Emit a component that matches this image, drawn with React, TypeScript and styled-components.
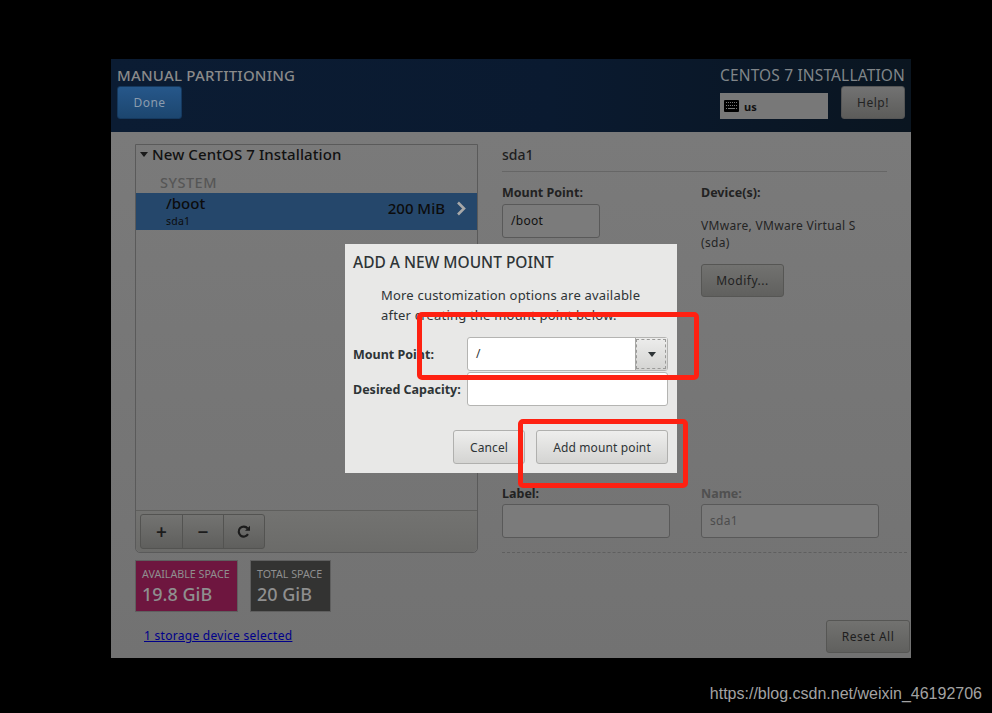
import styled, { createGlobalStyle } from "styled-components";

const GlobalStyle = createGlobalStyle`
    html, body {
        margin: 0;
        background: #000;
    }
    body {
        font-family: "Noto Sans", "Open Sans", sans-serif;
    }
`;

const KeyboardIcon = () => (
    <svg width="15" height="12" viewBox="0 0 15 12">
        <path
            fillRule="evenodd"
            fill="#000"
            d="M1 0h13a1 1 0 0 1 1 1v10a1 1 0 0 1-1 1H1a1 1 0 0 1-1-1V1a1 1 0 0 1 1-1zM2 2v1h1V2zm2 0v1h1V2zm2 0v1h1V2zm2 0v1h1V2zm2 0v1h1V2zm2 0v1h1V2zM2 5v1h1V5zm2 0v1h1V5zm2 0v1h1V5zm2 0v1h1V5zm2 0v1h1V5zm2 0v1h1V5zM2 8v1h1V8zm2 0v1h7V8zm8 0v1h1V8z"
        />
    </svg>
);

const RefreshIcon = () => (
    <svg width="14" height="14" viewBox="0 0 14 14">
        <path d="M11 9.2A5 5 0 1 1 10.6 3.4" fill="none" stroke="#1c1c1c" strokeWidth="2.2" />
        <path d="M8 5.8h5V0.8z" fill="#1c1c1c" />
    </svg>
);

const App = () => {
    return (
        <Page>
            <GlobalStyle />
            <Installer>
                <Header>
                    <HeaderLeft>
                        <SpokeTitle>MANUAL PARTITIONING</SpokeTitle>
                        <DoneButton>Done</DoneButton>
                    </HeaderLeft>
                    <HeaderRight>
                        <ProductTitle>CENTOS 7 INSTALLATION</ProductTitle>
                        <HeaderControls>
                            <KeyboardBox>
                                <KeyboardIcon />
                                <span>us</span>
                            </KeyboardBox>
                            <HelpButton>Help!</HelpButton>
                        </HeaderControls>
                    </HeaderRight>
                </Header>
                <Main>
                    <LeftColumn>
                        <MountPanel>
                            <PanelHeading>
                                <Caret />
                                New CentOS 7 Installation
                            </PanelHeading>
                            <SystemLabel>SYSTEM</SystemLabel>
                            <MountRow>
                                <div>
                                    <MountName>/boot</MountName>
                                    <MountDevice>sda1</MountDevice>
                                </div>
                                <MountSize>200 MiB</MountSize>
                                <Chevron viewBox="0 0 11 15" width="11" height="15">
                                    <path d="M2 1.5 8 7.5 2 13.5" fill="none" stroke="#a8a8a8" strokeWidth="2.6" />
                                </Chevron>
                            </MountRow>
                            <PanelSpacer />
                            <PanelToolbar>
                                <ToolGroup>
                                    <ToolButton>+</ToolButton>
                                    <ToolButton>−</ToolButton>
                                    <ToolButton $narrow>
                                        <RefreshIcon />
                                    </ToolButton>
                                </ToolGroup>
                            </PanelToolbar>
                        </MountPanel>
                        <Tiles>
                            <SpaceTile $bg="#6e163f" $width={103}>
                                <TileLabel>AVAILABLE SPACE</TileLabel>
                                <TileValue>19.8 GiB</TileValue>
                            </SpaceTile>
                            <SpaceTile $bg="#333332" $width={81}>
                                <TileLabel>TOTAL SPACE</TileLabel>
                                <TileValue>20 GiB</TileValue>
                            </SpaceTile>
                        </Tiles>
                        <StorageLink>1 storage device selected</StorageLink>
                    </LeftColumn>
                    <RightColumn>
                        <DeviceTitle>sda1</DeviceTitle>
                        <DetailsTop>
                            <Field $width={199}>
                                <TopLabel>Mount Point:</TopLabel>
                                <GhostInput $width={98}>/boot</GhostInput>
                            </Field>
                            <Field>
                                <TopLabel>Device(s):</TopLabel>
                                <DeviceText>
                                    VMware, VMware Virtual S
                                    <br />
                                    (sda)
                                </DeviceText>
                                <ModifyButton>Modify...</ModifyButton>
                            </Field>
                        </DetailsTop>
                        <DetailsBottom>
                            <Field $width={199}>
                                <FieldLabel>Label:</FieldLabel>
                                <GhostInput $width={168} />
                            </Field>
                            <Field>
                                <FieldLabel $muted>Name:</FieldLabel>
                                <GhostInput $width={178} $muted>
                                    sda1
                                </GhostInput>
                            </Field>
                        </DetailsBottom>
                        <DashedRule />
                        <ResetButton>Reset All</ResetButton>
                    </RightColumn>
                </Main>
                <Dialog>
                    <DialogTitle>ADD A NEW MOUNT POINT</DialogTitle>
                    <DialogText>
                        More customization options are available
                        <br />
                        after creating the mount point below.
                    </DialogText>
                    <DialogForm>
                        <DialogLabel>Mount Point:</DialogLabel>
                        <ComboBox>
                            <ComboValue>/</ComboValue>
                            <ComboArrow>
                                <Caret $dark />
                            </ComboArrow>
                        </ComboBox>
                        <DialogLabel>Desired Capacity:</DialogLabel>
                        <CapacityInput />
                    </DialogForm>
                    <DialogActions>
                        <DialogButton $width={72}>Cancel</DialogButton>
                        <DialogButton $width={132}>Add mount point</DialogButton>
                    </DialogActions>
                </Dialog>
            </Installer>
            <Watermark>https://blog.csdn.net/weixin_46192706</Watermark>
            <Annotation $left={417} $top={312} $width={282} $height={68} />
            <Annotation $left={518} $top={419} $width={170} $height={69} />
        </Page>
    );
};

const Page = styled.div`
    position: relative;
    width: 992px;
    height: 713px;
    padding: 59px 0 0 111px;
    box-sizing: border-box;
    overflow: hidden;
    background: #000;
`;

const Installer = styled.div`
    position: relative;
    display: flex;
    flex-direction: column;
    width: 800px;
    height: 599px;
    background: #747474;
`;

const Header = styled.header`
    display: flex;
    justify-content: space-between;
    height: 73px;
    padding: 6px 6px 0 6px;
    box-sizing: border-box;
    background: linear-gradient(90deg, #0b1c33 0%, #0a1a30 55%, #0a1520 100%);
`;

const HeaderLeft = styled.div`
    display: flex;
    flex-direction: column;
    align-items: flex-start;
`;

const HeaderRight = styled.div`
    display: flex;
    flex-direction: column;
    align-items: flex-end;
`;

const SpokeTitle = styled.div`
    height: 21px;
    font-size: 15px;
    line-height: 20px;
    font-weight: 500;
    letter-spacing: 0.2px;
    color: #8a8a8a;
    white-space: nowrap;
`;

const ProductTitle = styled.div`
    height: 21px;
    font-size: 15.5px;
    line-height: 20px;
    letter-spacing: 0.15px;
    color: #808589;
    white-space: nowrap;
`;

const HeaderButton = styled.div`
    display: flex;
    align-items: center;
    justify-content: center;
    height: 33px;
    box-sizing: border-box;
    border-radius: 3px;
    font-size: 12px;
    letter-spacing: 0.5px;
`;

const DoneButton = styled(HeaderButton)`
    width: 65px;
    border: 1px solid #15395f;
    background: linear-gradient(#26578a, #1c466f);
    color: #8b9cae;
`;

const HeaderControls = styled.div`
    display: flex;
    align-items: flex-end;
    gap: 13px;
`;

const KeyboardBox = styled.div`
    display: flex;
    align-items: center;
    gap: 5px;
    width: 108px;
    height: 26px;
    padding-left: 4px;
    box-sizing: border-box;
    background: #787878;
    font-size: 11px;
    font-weight: 700;
    color: #111;
`;

const HelpButton = styled(HeaderButton)`
    width: 64px;
    border: 1px solid #555;
    background: linear-gradient(#727272, #5c5c5a);
    color: #222;
`;

const Main = styled.main`
    flex: 1;
    display: grid;
    grid-template-columns: 343px 1fr;
    column-gap: 24px;
    padding: 12px 1px 5px 24px;
    min-height: 0;
    background: linear-gradient(#7a7a7a, #727272);
`;

const LeftColumn = styled.section`
    display: flex;
    flex-direction: column;
`;

const MountPanel = styled.div`
    display: flex;
    flex-direction: column;
    height: 409px;
    box-sizing: border-box;
    border: 1px solid #5a5a5a;
    border-radius: 0 0 5px 5px;
`;

const PanelHeading = styled.div`
    display: flex;
    align-items: center;
    gap: 4px;
    height: 18px;
    margin-bottom: 4px;
    padding-left: 4px;
    font-size: 15px;
    letter-spacing: 0.1px;
    font-weight: 500;
    color: #111;
    white-space: nowrap;
`;

const Caret = styled.span<{ $dark?: boolean }>`
    display: inline-block;
    width: 0;
    height: 0;
    border-left: 4.5px solid transparent;
    border-right: 4.5px solid transparent;
    border-top: 5px solid ${(p) => (p.$dark ? "#2e3436" : "#1a1a1a")};
`;

const SystemLabel = styled.div`
    height: 26px;
    padding-left: 24px;
    padding-top: 5px;
    box-sizing: border-box;
    font-size: 14.5px;
    line-height: 21px;
    letter-spacing: 0.5px;
    font-weight: 500;
    color: #565656;
`;

const MountRow = styled.div`
    display: flex;
    align-items: center;
    height: 37px;
    padding-left: 30px;
    box-sizing: border-box;
    background: #25476b;
    color: #0c0c0c;
`;

const MountName = styled.div`
    font-size: 15px;
    line-height: 18px;
    font-weight: 500;
`;

const MountDevice = styled.div`
    margin-top: 2px;
    font-size: 10.5px;
    line-height: 15px;
    letter-spacing: 0.2px;
`;

const MountSize = styled.div`
    margin: 0 0 7px auto;
    font-size: 15px;
    font-weight: 500;
`;

const Chevron = styled.svg`
    margin: 0 10px 7px 11px;
`;

const PanelSpacer = styled.div`
    flex: 1;
`;

const PanelToolbar = styled.div`
    height: 42px;
    padding: 3px 0 0 4px;
    box-sizing: border-box;
    border-top: 1px solid #5f5f5d;
    background: linear-gradient(#737371, #6b6b69);
    border-radius: 0 0 5px 5px;
`;

const ToolGroup = styled.div`
    display: inline-flex;
    height: 35px;
    box-sizing: border-box;
    border: 1px solid #535351;
    border-radius: 3px;
    background: linear-gradient(#737371, #5f5f5d);
`;

const ToolButton = styled.div<{ $narrow?: boolean }>`
    display: flex;
    align-items: center;
    justify-content: center;
    width: ${(p) => (p.$narrow ? "40px" : "41px")};
    box-sizing: border-box;
    font-size: 19px;
    font-weight: 600;
    color: #1c1c1c;
    & + & {
        border-left: 1px solid #535351;
        width: ${(p) => (p.$narrow ? "41px" : "42px")};
    }
`;

const Tiles = styled.div`
    display: flex;
    gap: 12px;
    margin-top: 7px;
`;

const SpaceTile = styled.div<{ $bg: string; $width: number }>`
    display: flex;
    flex-direction: column;
    width: ${(p) => p.$width}px;
    height: 52px;
    padding: 6px 0 0 6px;
    box-sizing: border-box;
    border: 1px solid #5f5f5f;
    background: ${(p) => p.$bg};
    color: #8f8f8f;
    white-space: nowrap;
`;

const TileLabel = styled.div`
    font-size: 10.7px;
    line-height: 14px;
`;

const TileValue = styled.div`
    font-size: 18px;
    line-height: 26px;
    font-weight: 500;
`;

const StorageLink = styled.a`
    margin: 15px 0 0 9px;
    font-size: 12px;
    line-height: 17px;
    letter-spacing: 0.28px;
    color: #00008a;
    text-decoration: underline;
`;

const RightColumn = styled.section`
    display: flex;
    flex-direction: column;
`;

const DeviceTitle = styled.div`
    width: 385px;
    height: 27px;
    border-bottom: 1px solid #666;
    font-size: 14px;
    line-height: 22px;
    font-weight: 500;
    color: #1e1e1e;
`;

const DetailsTop = styled.div`
    display: flex;
    margin-top: 12px;
    height: 302px;
    padding-top: 1px;
    box-sizing: border-box;
`;

const DetailsBottom = styled.div`
    display: flex;
`;

const Field = styled.div<{ $width?: number }>`
    display: flex;
    flex-direction: column;
    align-items: flex-start;
    width: ${(p) => (p.$width ? `${p.$width}px` : "auto")};
`;

const FieldLabel = styled.div<{ $muted?: boolean }>`
    height: 18px;
    font-size: 12.5px;
    line-height: 16px;
    font-weight: 700;
    color: ${(p) => (p.$muted ? "#505050" : "#222")};
`;

const TopLabel = styled(FieldLabel)`
    height: 19px;
`;

const GhostInput = styled.div<{ $width: number; $muted?: boolean }>`
    width: ${(p) => p.$width}px;
    height: 34px;
    padding-left: 8px;
    box-sizing: border-box;
    border: 1px solid #595959;
    border-radius: 3px;
    background: #7b7b7b;
    font-size: 12px;
    line-height: 32px;
    letter-spacing: 0.3px;
    color: ${(p) => (p.$muted ? "#4c4c4c" : "#111")};
`;

const DeviceText = styled.div`
    margin-top: 13px;
    font-size: 12px;
    line-height: 17px;
    letter-spacing: 0.3px;
    color: #242424;
    white-space: nowrap;
`;

const ModifyButton = styled(HeaderButton)`
    width: 83px;
    margin-top: 13px;
    border: 1px solid #565654;
    background: linear-gradient(#727270, #60605e);
    color: #222;
`;

const DashedRule = styled.div`
    width: 405px;
    margin-top: 14px;
    border-top: 1px dashed #5f5f5f;
`;

const ResetButton = styled(HeaderButton)`
    align-self: flex-end;
    width: 84px;
    margin-top: auto;
    border: 1px solid #565654;
    background: linear-gradient(#727270, #60605e);
    color: #1e1e1e;
`;

const Dialog = styled.div`
    position: absolute;
    left: 234px;
    top: 185px;
    display: flex;
    flex-direction: column;
    width: 332px;
    height: 229px;
    padding: 0 9px 0 8px;
    box-sizing: border-box;
    background: #e8e8e7;
`;

const DialogTitle = styled.div`
    margin-top: 8px;
    height: 20px;
    font-size: 15.5px;
    line-height: 20px;
    font-weight: 500;
    color: #2e3436;
    white-space: nowrap;
`;

const DialogText = styled.div`
    margin: 13px 0 0 28px;
    font-size: 13px;
    line-height: 20px;
    letter-spacing: 0.2px;
    color: #2e3436;
    white-space: nowrap;
`;

const DialogForm = styled.div`
    display: grid;
    grid-template-columns: 114px 201px;
    grid-auto-rows: 34px;
    row-gap: 1px;
    align-items: center;
    margin-top: 12px;
`;

const DialogLabel = styled.div`
    font-size: 12.5px;
    font-weight: 700;
    color: #2e3436;
    white-space: nowrap;
`;

const ComboBox = styled.div`
    display: flex;
    height: 34px;
    box-sizing: border-box;
    border: 1px solid #b4b4b2;
    border-radius: 3px;
    background: #fff;
`;

const ComboValue = styled.div`
    flex: 1;
    padding-left: 8px;
    font-size: 12px;
    line-height: 32px;
    color: #2e3436;
`;

const ComboArrow = styled.div`
    display: flex;
    align-items: center;
    justify-content: center;
    width: 32px;
    box-sizing: border-box;
    border-left: 1px solid #a8a8a6;
    outline: 1px dashed #9a9a98;
    outline-offset: -2px;
    background: linear-gradient(#ededec, #d4d4d2);
`;

const CapacityInput = styled.div`
    height: 34px;
    box-sizing: border-box;
    border: 1px solid #b4b4b2;
    border-radius: 3px;
    background: #fff;
`;

const DialogActions = styled.div`
    display: flex;
    justify-content: flex-end;
    gap: 11px;
    margin-top: 24px;
`;

const DialogButton = styled.div<{ $width: number }>`
    display: flex;
    align-items: center;
    justify-content: center;
    width: ${(p) => p.$width}px;
    height: 34px;
    box-sizing: border-box;
    border: 1px solid #b0b0ae;
    border-radius: 3px;
    background: linear-gradient(#eeeeed, #d4d4d2);
    font-size: 12px;
    letter-spacing: 0.13px;
    color: #2e3436;
    white-space: nowrap;
`;

const Watermark = styled.div`
    margin: 26px 10px 0 0;
    font-family: "Liberation Sans", sans-serif;
    font-size: 16px;
    line-height: 20px;
    text-align: right;
    color: #a3a3a3;
    white-space: nowrap;
`;

const Annotation = styled.div<{ $left: number; $top: number; $width: number; $height: number }>`
    position: absolute;
    left: ${(p) => p.$left}px;
    top: ${(p) => p.$top}px;
    width: ${(p) => p.$width}px;
    height: ${(p) => p.$height}px;
    box-sizing: border-box;
    border: 5px solid #fe2112;
    border-radius: 5px;
`;

export default App;
